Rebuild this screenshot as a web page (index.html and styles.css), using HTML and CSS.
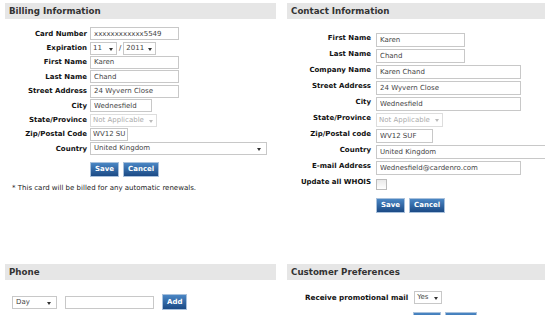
FILE: index.html
```html
<!DOCTYPE html>
<html>
<head>
    <title>Account Details</title>
    <link rel="stylesheet" href="styles.css">
</head>
<body>
    <div id="page">
        <div class="panel billing">
            <h2 class="head">Billing Information</h2>
            <form class="fields left">
                <label>Card Number</label>
                <div><input type="text" class="w-md" value="xxxxxxxxxxxx5549"></div>
                <label>Expiration</label>
                <div class="expiry">
                    <span class="sel small w-month">11</span>
                    <span class="slash">/</span>
                    <span class="sel small w-year">2011</span>
                </div>
                <label>First Name</label>
                <div><input type="text" class="w-md" value="Karen"></div>
                <label>Last Name</label>
                <div><input type="text" class="w-md" value="Chand"></div>
                <label>Street Address</label>
                <div><input type="text" class="w-md" value="24 Wyvern Close"></div>
                <label>City</label>
                <div><input type="text" class="w-city" value="Wednesfield"></div>
                <label>State/Province</label>
                <div><span class="sel off w-state">Not Applicable</span></div>
                <label>Zip/Postal Code</label>
                <div><input type="text" class="w-zip" value="WV12 SU"></div>
                <label>Country</label>
                <div><span class="sel w-country">United Kingdom</span></div>
                <span></span>
                <div class="buttons">
                    <button type="button" class="btn">Save</button>
                    <button type="button" class="btn">Cancel</button>
                </div>
            </form>
            <p class="note">* This card will be billed for any automatic renewals.</p>
        </div>

        <div class="panel contact">
            <h2 class="head">Contact Information</h2>
            <form class="fields right">
                <label>First Name</label>
                <div><input type="text" class="w-md" value="Karen"></div>
                <label>Last Name</label>
                <div><input type="text" class="w-md" value="Chand"></div>
                <label>Company Name</label>
                <div><input type="text" class="w-lg" value="Karen Chand"></div>
                <label>Street Address</label>
                <div><input type="text" class="w-lg" value="24 Wyvern Close"></div>
                <label>City</label>
                <div><input type="text" class="w-lg" value="Wednesfield"></div>
                <label>State/Province</label>
                <div><span class="sel off w-state2">Not Applicable</span></div>
                <label>Zip/Postal code</label>
                <div><input type="text" class="w-zip2" value="WV12 SUF"></div>
                <label>Country</label>
                <div><input type="text" class="w-xl" value="United Kingdom"></div>
                <label>E-mail Address</label>
                <div><input type="text" class="w-lg" value="Wednesfield@cardenro.com"></div>
                <label>Update all WHOIS</label>
                <div><span class="check"></span></div>
                <span></span>
                <div class="buttons">
                    <button type="button" class="btn">Save</button>
                    <button type="button" class="btn">Cancel</button>
                </div>
            </form>
        </div>

        <div class="panel phone">
            <h2 class="head">Phone</h2>
            <div class="phone-row">
                <span class="sel w-day">Day</span>
                <input type="text" class="w-phone">
                <button type="button" class="btn">Add</button>
            </div>
        </div>

        <div class="panel prefs">
            <h2 class="head">Customer Preferences</h2>
            <div class="pref-row">
                <label>Receive promotional mail</label>
                <span class="sel small w-yes">Yes</span>
            </div>
            <div class="buttons pref-buttons">
                <button type="button" class="btn">Save</button>
                <button type="button" class="btn">Cancel</button>
            </div>
        </div>
    </div>
</body>
</html>
```

FILE: styles.css
```css
html, body {
    margin: 0;
    padding: 0;
    overflow: hidden;
    background-color: white;
}

body {
    font-family: "DejaVu Sans", Verdana, sans-serif;
    font-size: 7px;
    color: #222;
}

#page {
    display: grid;
    grid-template-columns: 271px 270px;
    grid-template-rows: 261px auto;
    column-gap: 11px;
    padding: 3px 0 0 5px;
}

.head {
    margin: 0;
    height: 16px;
    line-height: 16px;
    padding-left: 4px;
    background-color: #e6e6e6;
    color: #333;
    font-size: 8.7px;
    font-weight: bold;
}

.fields {
    display: grid;
    align-items: center;
    margin: 0;
}

.fields label {
    text-align: right;
    font-weight: bold;
    color: #111;
}

    .fields.left {
        grid-template-columns: 82px auto;
        column-gap: 3px;
        row-gap: 1px;
        padding-top: 8px;
        grid-auto-rows: 13.4px;
    }

    .fields.right {
        grid-template-columns: 84px auto;
        column-gap: 5px;
        row-gap: 2px;
        padding-top: 14px;
        grid-auto-rows: 14px;
        align-items: start;
    }

        .fields.right label {
            line-height: 11px;
        }

input[type=text], .sel {
    box-sizing: border-box;
    display: inline-block;
    height: 13px;
    margin: 0;
    padding: 0 3px;
    border: 1px solid #c8c8c8;
    background-color: white;
    font-family: inherit;
    font-size: 7px;
    line-height: 11px;
    color: #444;
    vertical-align: middle;
}

.right input[type=text], .right .sel {
    height: 14px;
    line-height: 12px;
}

.sel {
    position: relative;
    padding-right: 12px;
    white-space: nowrap;
    overflow: hidden;
}

    .sel.small {
        padding-left: 2px;
        padding-right: 8px;
    }

    .sel::after {
        content: "";
        position: absolute;
        right: 5px;
        top: 5px;
        border-left: 2px solid transparent;
        border-right: 2px solid transparent;
        border-top: 3px solid #333;
    }

    .sel.small::after {
        right: 3px;
    }

    .sel.off {
        color: #aaa;
        border-color: #ddd;
        padding-left: 2px;
        padding-right: 9px;
    }

        .sel.off::after {
            right: 3px;
            border-top-color: #bbb;
        }

.w-md { width: 89px; }
.w-lg { width: 145px; }
.w-xl { width: 175px; }
.w-city { width: 62px; }
.w-zip { width: 38px; padding-left: 2px !important; padding-right: 0 !important; }
.w-zip2 { width: 57px; }
.w-month { width: 27px; }
.w-year { width: 33px; }
.w-state { width: 67px; }
.w-state2 { width: 67px; }
.w-country { width: 177px; }
.w-day { width: 45px; }
.w-phone { width: 89px; }
.w-yes { width: 28px; }

.expiry {
    display: flex;
    align-items: center;
    gap: 2px;
}

.slash {
    color: #333;
}

.check {
    display: inline-block;
    width: 9px;
    height: 9px;
    margin-top: 2px;
    border: 1px solid #bbb;
    background: linear-gradient(#e9e9e9, #fff);
}

.buttons {
    display: flex;
    gap: 4px;
    align-items: flex-start;
}

.left .buttons {
    margin-top: 12px;
    height: 15px;
}

.right .buttons {
    margin-top: 5px;
    height: 15px;
}

.btn {
    height: 15px;
    margin: 0;
    padding: 0 4px;
    border: 1px solid #a9c1dc;
    background: linear-gradient(#4a86c4, #1b4a85);
    color: white;
    font-family: inherit;
    font-size: 7px;
    font-weight: bold;
    line-height: 13px;
}

.note {
    margin: 14px 0 0 7px;
    font-size: 7px;
    color: #222;
}

.phone-row {
    display: flex;
    align-items: center;
    padding: 14px 0 0 7px;
}

    .phone-row .w-phone {
        margin-left: 8px;
    }

    .phone-row .btn {
        margin-left: 8px;
        height: 16px;
        padding: 0 4px;
    }

.pref-row {
    display: flex;
    align-items: center;
    gap: 6px;
    padding: 11px 0 0 18px;
}

    .pref-row label {
        font-weight: bold;
        font-size: 7.2px;
        color: #111;
    }

.pref-buttons {
    padding: 8px 0 0 126px;
}

    .pref-buttons .btn {
        width: 28px;
    }

        .pref-buttons .btn + .btn {
            width: 32px;
        }
```
